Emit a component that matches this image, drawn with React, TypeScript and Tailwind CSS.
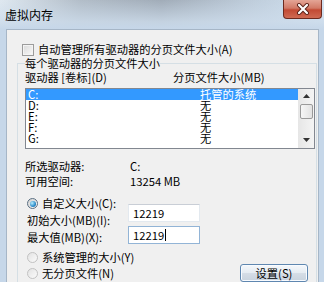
const drives = [
  { name: "C:", size: "托管的系统", selected: true },
  { name: "D:", size: "无", selected: false },
  { name: "E:", size: "无", selected: false },
  { name: "F:", size: "无", selected: false },
  { name: "G:", size: "无", selected: false },
];

const Radio = ({ checked }: { checked: boolean }) => (
  <span
    className={
      checked
        ? "flex h-[11px] w-[11px] shrink-0 items-center justify-center rounded-full border border-[#5a6f82] bg-[linear-gradient(135deg,#d0d0d0,#fafafa)]"
        : "flex h-[11px] w-[11px] shrink-0 items-center justify-center rounded-full border border-[#c2c2c2] bg-[linear-gradient(135deg,#e2e2e2,#fbfbfb)]"
    }
  >
    {checked ? (
      <span className="h-[6px] w-[6px] rounded-full bg-[radial-gradient(circle_at_35%_35%,#b9f0ff,#2b8bc9_60%,#1a5f93)]" />
    ) : null}
  </span>
);

const Arrow = ({ up }: { up: boolean }) => (
  <svg width="7" height="4" viewBox="0 0 7 4">
    <path d={up ? "M0 4 L3.5 0 L7 4 Z" : "M0 0 L3.5 4 L7 0 Z"} fill="#333" />
  </svg>
);

export default function App() {
  return (
    <div className="flex h-[282px] w-[324px] flex-col overflow-hidden bg-[#c6d7e9] font-['Noto_Sans_CJK_SC',sans-serif] text-black">
      <div className="flex h-[29px] shrink-0 items-start justify-between bg-[linear-gradient(180deg,rgba(255,255,255,0)_0%,rgba(205,220,235,0.8)_75%,#c6d7e9_100%),linear-gradient(90deg,#dfe8f0_0%,#b2bdc8_25%,#a1acb8_50%,#bccad8_75%,#d2e2f1_100%)]">
        <span className="pl-[5px] pt-[7px] text-[12px] leading-[16px]">虚拟内存</span>
        <button
          type="button"
          className="mr-[2px] flex h-[19px] w-[39px] items-center justify-center rounded-b-[4px] border border-t-0 border-[#6d2a1f] bg-[linear-gradient(180deg,#e4a596_0%,#d27a67_45%,#c24a34_55%,#cf6a53_100%)]"
        >
          <svg width="14" height="12" viewBox="0 0 14 12">
            <path d="M3 2 L11 10 M11 2 L3 10" stroke="#5b2118" strokeWidth="4" strokeLinecap="round" />
            <path d="M3 2 L11 10 M11 2 L3 10" stroke="#ffffff" strokeWidth="2.2" strokeLinecap="round" />
          </svg>
        </button>
      </div>

      <div className="ml-[6px] mr-[5px] flex-1 border border-b-0 border-[#a6b6c7] bg-[#f0f0f0] text-[11.25px] leading-[13px]">
        <div className="ml-[15px] mt-[13px] flex h-[13px] items-center gap-[4px]">
          <span className="h-[12px] w-[12px] border border-[#9c9c9c] bg-[linear-gradient(135deg,#d9d9d9,#fafafa)] shadow-[inset_0_0_0_1px_#f4f4f4]" />
          <span>自动管理所有驱动器的分页文件大小(A)</span>
        </div>

        <fieldset className="ml-[10px] mr-[2px] mt-[1px] border border-[#d5dfe5] pl-[7px] pr-[1px]">
          <legend className="leading-[13px]">每个驱动器的分页文件大小</legend>

          <div className="mt-[1px] flex h-[13px]">
            <span className="w-[148px]">驱动器 [卷标](D)</span>
            <span>分页文件大小(MB)</span>
          </div>

          <div className="mt-[4px] flex h-[61px] w-[290px] border border-[#828790] bg-white">
            <div className="flex-1">
              {drives.map((drive) => (
                <div
                  key={drive.name}
                  className={
                    drive.selected
                      ? "flex h-[11px] items-center bg-[#3399ff] leading-[11px] text-white"
                      : "flex h-[11px] items-center leading-[11px]"
                  }
                >
                  <span className="w-[174px] pl-[2px]">{drive.name}</span>
                  <span>{drive.size}</span>
                </div>
              ))}
            </div>
            <div className="flex w-[16px] flex-col items-center bg-[linear-gradient(90deg,#e6e6e6,#f4f4f4)]">
              <div className="flex h-[15px] items-start pt-[5px]">
                <Arrow up />
              </div>
              <div className="h-[15px] w-[13px] rounded-[2px] border border-[#9a9a9a] bg-[linear-gradient(90deg,#f6f6f6,#e2e2e2)]" />
              <div className="flex-1" />
              <div className="flex h-[13px] items-start pt-[3px]">
                <Arrow up={false} />
              </div>
            </div>
          </div>

          <div className="mt-[11px] flex h-[13px]">
            <span className="w-[105px]">所选驱动器:</span>
            <span>C:</span>
          </div>
          <div className="mt-[2px] flex h-[13px]">
            <span className="w-[105px]">可用空间:</span>
            <span>13254 MB</span>
          </div>

          <div className="mt-[9px] flex">
            <div className="w-[103px] pl-[2px]">
              <div className="flex h-[13px] items-center gap-[4px]">
                <Radio checked />
                <span>自定义大小(C):</span>
              </div>
              <div className="mt-[4px] h-[13px]">初始大小(MB)(I):</div>
              <div className="mt-[4px] h-[13px]">最大值(MB)(X):</div>
            </div>
            <div className="mt-[7px]">
              <div className="flex h-[18px] w-[72px] items-center border border-[#e3e9ef] border-t-[#c9ced6] bg-white pl-[4px]">
                12219
              </div>
              <div className="mt-[4px] flex h-[18px] w-[72px] items-center border border-[#92b4d6] bg-white pl-[4px]">
                12219
                <span className="ml-[1px] h-[12px] w-[1px] bg-black" />
              </div>
            </div>
          </div>

          <div className="mt-[7px] flex h-[13px] items-center gap-[4px] pl-[2px]">
            <Radio checked={false} />
            <span>系统管理的大小(Y)</span>
          </div>
          <div className="flex items-start justify-between pl-[2px] pr-[7px]">
            <div className="mt-[3px] flex h-[13px] items-center gap-[4px]">
              <Radio checked={false} />
              <span>无分页文件(N)</span>
            </div>
            <button
              type="button"
              className="flex h-[18px] w-[68px] items-center justify-center rounded-[3px] border border-[#5f87b0] bg-[linear-gradient(180deg,#f5f8fb_0%,#e6ecf2_48%,#d5dde6_52%,#c9d3de_100%)] leading-[13px] shadow-[inset_0_0_0_1px_#f8fbff]"
            >
              设置(S)
            </button>
          </div>
        </fieldset>
      </div>
    </div>
  );
}
